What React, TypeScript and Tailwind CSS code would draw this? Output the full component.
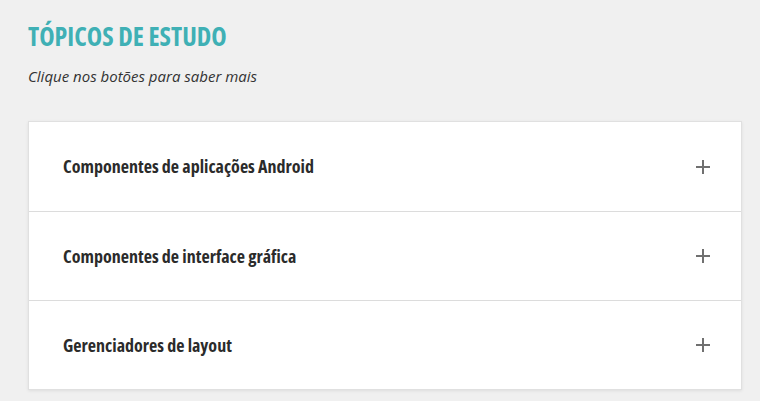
const topics = [
  "Componentes de aplicações Android",
  "Componentes de interface gráfica",
  "Gerenciadores de layout",
];

function Plus() {
  return (
    <svg width="16" height="16" viewBox="0 0 16 16" className="text-[#707070]">
      <path d="M8 1v14M1 8h14" stroke="currentColor" strokeWidth="2" />
    </svg>
  );
}

export default function App() {
  return (
    <div className="min-h-[401px] bg-[#f0f0f0] px-[28px] pt-[20px] font-['Open_Sans',sans-serif]">
      <h1 className="text-[26px] leading-[32px] font-bold text-[#3fb0b5] [font-stretch:76%]">
        TÓPICOS DE ESTUDO
      </h1>
      <p className="mt-[14px] text-[15px] leading-[20px] italic text-[#333]">
        Clique nos botões para saber mais
      </p>
      <div className="mt-[35px] w-[714px] border border-[#e0e0e0] bg-white shadow-[0_1px_3px_rgba(0,0,0,0.08)]">
        {topics.map((t, i) => (
          <div
            key={t}
            className={`flex h-[89px] items-center justify-between pl-[34px] pr-[30px] ${
              i > 0 ? "border-t border-[#dcdcdc]" : ""
            }`}
          >
            <span className="text-[18px] font-bold text-[#2b2b2b] [font-stretch:77%]">{t}</span>
            <Plus />
          </div>
        ))}
      </div>
    </div>
  );
}
